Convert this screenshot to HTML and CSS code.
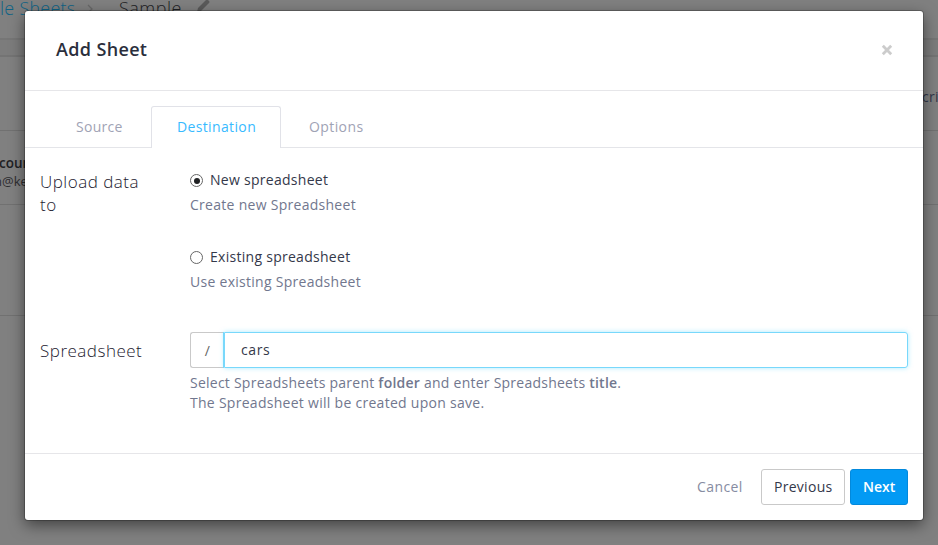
FILE: index.html
```html
<!DOCTYPE html>
<html lang="en">
<head>
<meta charset="utf-8">
<title>Add Sheet</title>
<link rel="stylesheet" href="styles.css">
</head>
<body>
<div class="page">
  <header class="crumbs">
    <span class="crumb-link">le Sheets</span>
    <svg class="chevron" width="6" height="10" viewBox="0 0 6 10"><path d="M1 1l4 4-4 4" fill="none" stroke="#686868" stroke-width="1.3"/></svg>
    <span class="crumb-current">Sample</span>
    <svg class="pencil" width="14" height="14" viewBox="0 0 14 14"><path d="M1 13l1-4 8-8q1-1 2 0l1 1q1 1 0 2l-8 8z" fill="#5a5a5a"/></svg>
  </header>
  <div class="band"></div>
  <div class="row row-head"><span>cri</span></div>
  <div class="row row-account"><b>cour</b><span>n@ke</span></div>
  <div class="row row-empty"></div>
</div>
<div class="modal" role="dialog">
  <div class="modal-header">
    <h4>Add Sheet</h4>
    <svg class="close" width="12" height="12" viewBox="0 0 12 12"><path d="M1.8 1.8l8.4 8.4M10.2 1.8L1.8 10.2" stroke="#ccc" stroke-width="2.8"/></svg>
  </div>
  <nav class="tabs">
    <a class="tab tab-source">Source</a>
    <a class="tab tab-active">Destination</a>
    <a class="tab tab-options">Options</a>
  </nav>
  <div class="modal-body">
    <div class="field field-upload">
      <div class="label">Upload data to</div>
      <div class="options">
        <label class="radio"><i class="dot checked"></i><span>New spreadsheet</span></label>
        <p class="help">Create new Spreadsheet</p>
        <label class="radio second"><i class="dot"></i><span>Existing spreadsheet</span></label>
        <p class="help">Use existing Spreadsheet</p>
      </div>
    </div>
    <div class="field field-sheet">
      <div class="label">Spreadsheet</div>
      <div class="options">
        <div class="input-group"><span class="addon">/</span><div class="input">cars</div></div>
        <p class="help hint"><span class="hint-select">Select Spreadsheets parent <b>folder</b> and enter Spreadsheets <b>title</b>.</span><br>The Spreadsheet will be created upon save.</p>
      </div>
    </div>
  </div>
  <footer class="modal-footer">
    <span class="cancel">Cancel</span>
    <span class="btn previous">Previous</span>
    <span class="btn next">Next</span>
  </footer>
</div>
</body>
</html>
```
FILE: styles.css
```css
* { box-sizing: border-box; }
body {
  margin: 0;
  width: 938px;
  height: 545px;
  overflow: hidden;
  background: #808080;
  font: 14px/20px "Open Sans", "Noto Sans", sans-serif;
  letter-spacing: .28px;
  color: #34384a;
}
.page { height: 545px; overflow: hidden; color: #202124; }
.crumbs {
  display: flex;
  height: 40px;
  padding-top: 1px;
  border-bottom: 2px solid #767676;
  font-size: 18px;
  line-height: 14px;
  font-weight: 300;
}
.crumb-link { width: 76px; color: #0f6386; letter-spacing: .25px; white-space: nowrap; }
.chevron { margin: 3px 0 0 11px; }
.crumb-current { margin-left: 26px; width: 65px; letter-spacing: .5px; }
.pencil { margin-left: 12px; margin-top: -2px; }
.band { height: 17px; background: #7c7c7c; border-bottom: 2px solid #747474; }
.row { border-bottom: 1px solid #717171; }
.row-head { height: 74px; padding: 30px 0 0 922px; color: #32374a; overflow: hidden; }
.row-account { height: 74px; padding-top: 23px; line-height: 18px; letter-spacing: 0; }
.row-account b, .row-account span { display: block; height: 18px; white-space: nowrap; }
.row-account b { font-size: 13.5px; font-weight: 600; text-indent: -1px; }
.row-account span { font-size: 13px; text-indent: -6px; color: #2d2d30; }
.row-empty { height: 111px; }
.modal {
  position: absolute;
  left: 25px;
  top: 11px;
  width: 898px;
  height: 509px;
  display: flex;
  flex-direction: column;
  background: #fff;
  border-radius: 3px;
  box-shadow: 0 0 0 1px rgba(0,0,0,.22), 0 5px 15px rgba(0,0,0,.5);
}
.modal-header {
  display: flex;
  justify-content: space-between;
  height: 80px;
  padding: 26px 30px 0 31px;
  border-bottom: 1px solid #e6e6e9;
}
h4 { margin: 0; font-size: 18px; line-height: 25px; font-weight: 600; letter-spacing: .35px; color: #2b2f3d; }
.close { margin-top: 7px; }
.tabs {
  display: flex;
  height: 57px;
  padding: 15px 0 0 26px;
  border-bottom: 1px solid #e4e5e9;
}
.tab { height: 42px; padding-top: 11px; color: #9fa3b5; border: 0 solid #e1e2e8; }
.tab-source { width: 100px; padding-left: 25px; }
.tab-active { width: 130px; padding: 10px 0 0 25px; border-width: 1px 1px 0; border-radius: 3px 3px 0 0; background: #fff; color: #38baff; letter-spacing: .36px; }
.tab-options { padding-left: 28px; letter-spacing: .4px; }
.modal-body { height: 305px; padding: 22px 15px 0; }
.field { display: flex; }
.field-upload { height: 162px; }
.label { width: 150px; padding-right: 40px; font-size: 17px; line-height: 23px; font-weight: 300; letter-spacing: .5px; color: #1d2130; }
.options { flex: 1; }
.radio { display: flex; align-items: center; height: 21px; }
.radio.second { margin-top: 32px; }
.radio span { margin-top: -1px; }
.dot { width: 13px; height: 13px; margin-right: 7px; border: 1.5px solid #666; border-radius: 50%; display: grid; place-items: center; }
.checked::before { content: ""; width: 6px; height: 6px; border-radius: 50%; background: #202124; }
.help { margin: 4px 0 0; height: 20px; color: #71778e; }
.hint { margin-top: 5px; height: 40px; white-space: nowrap; }
.hint-select { letter-spacing: .24px; }
.hint b { font-weight: 600; }
.field-sheet .label { padding: 7px 0 0; }
.input-group { display: flex; height: 36px; }
.addon { width: 34px; border: 1px solid #c9c9c9; border-right: 0; border-radius: 3px 0 0 3px; line-height: 35px; text-align: center; color: #666; }
.input { flex: 1; border: 1px solid #78d8fb; border-radius: 0 3px 3px 0; box-shadow: -1px 0 0 #78d8fb, 0 0 5px rgba(102,217,255,.55); padding-left: 16px; line-height: 34px; letter-spacing: .6px; }
.modal-footer { height: 67px; display: flex; justify-content: flex-end; align-items: center; padding: 0 15px; border-top: 1px solid #e6e6e9; }
.cancel { width: 46px; margin-right: 18px; color: #868ca2; letter-spacing: .4px; }
.btn { height: 36px; border: 1px solid #c9c9c9; border-radius: 3px; line-height: 34px; padding-left: 12px; }
.previous { width: 84px; margin-right: 5px; }
.next { width: 58px; background: #039af4; border-color: #0389dc; color: #fff; font-weight: 600; letter-spacing: 0; }
```
